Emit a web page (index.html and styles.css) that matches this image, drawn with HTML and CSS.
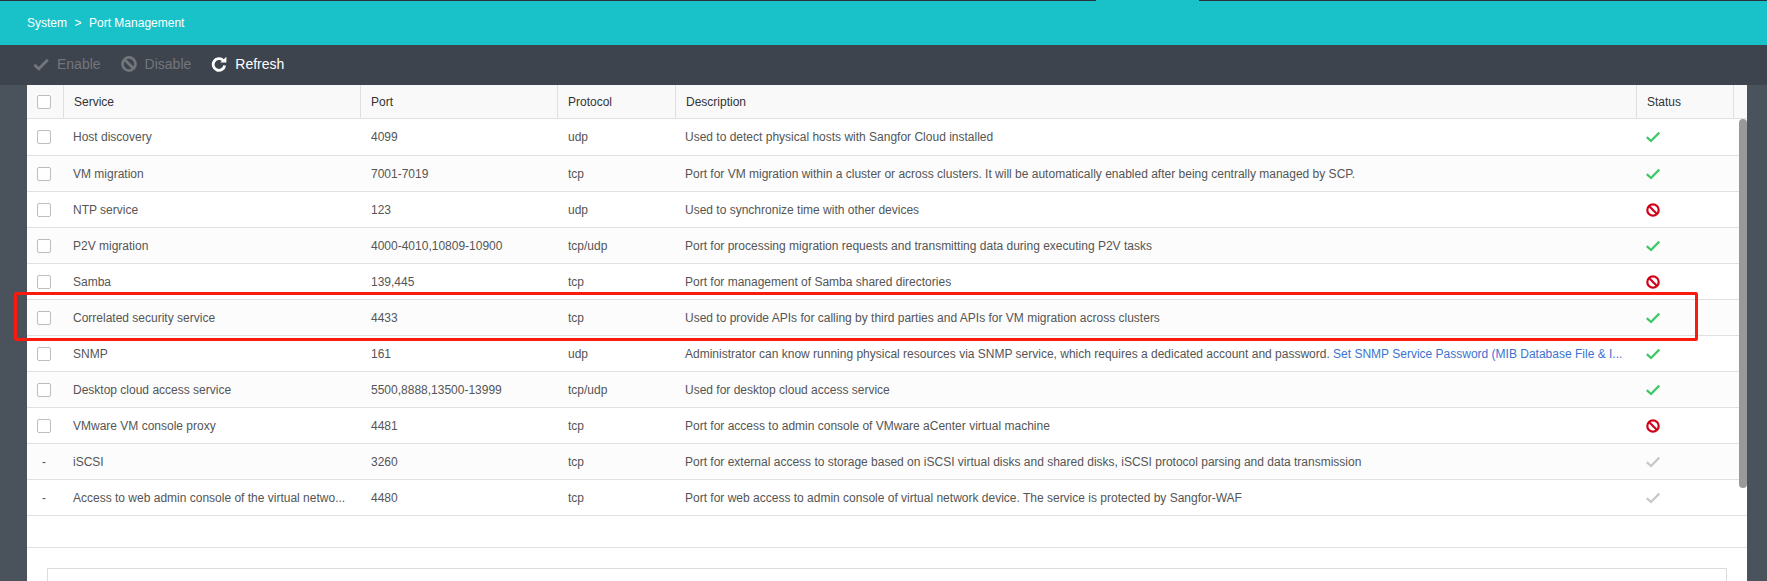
FILE: index.html
```html
<!DOCTYPE html>
<html lang="en">
<head>
<meta charset="utf-8">
<title>Port Management</title>
<link rel="stylesheet" href="styles.css">
</head>
<body>
<svg class="defs" width="0" height="0" aria-hidden="true">
  <symbol id="check" viewBox="0 0 14 12"><path d="M.8 6.2 5 10 13.3 1.6" fill="none" stroke="currentColor"/></symbol>
  <symbol id="ban" viewBox="0 0 14 14"><circle cx="7" cy="7" r="5.7" fill="none" stroke="currentColor"/><path d="M3 3 11 11" fill="none" stroke="currentColor"/></symbol>
</svg>
<header class="topbar">
  <div class="topline"><span class="seg-a"></span><span class="seg-gap"></span><span class="seg-b"></span></div>
  <nav class="crumbs"><span>System</span><span class="sep">&gt;</span><span>Port Management</span></nav>
</header>
<div class="toolbar">
  <button class="tool off"><svg class="ti ti-check"><use href="#check"/></svg>Enable</button>
  <button class="tool off"><svg class="ti ti-ban"><use href="#ban"/></svg>Disable</button>
  <button class="tool on"><svg class="ti ti-ref" viewBox="0 0 16 16"><path d="M12.3 4.6A5.8 5.8 0 1 0 13.7 9.4" fill="none" stroke="currentColor" stroke-width="2.8"/><path d="M9.2 6.6 15.4 .8V6.6Z" fill="currentColor"/></svg>Refresh</button>
</div>
<main class="panel">
  <table class="grid">
    <colgroup><col class="c0"><col class="c1"><col class="c2"><col class="c3"><col class="c4"><col class="c5"><col class="c6"></colgroup>
    <thead>
      <tr><th><i class="box"></i></th><th>Service</th><th>Port</th><th>Protocol</th><th>Description</th><th>Status</th><th></th></tr>
    </thead>
    <tbody>
      <tr><td><i class="box"></i></td><td>Host discovery</td><td>4099</td><td>udp</td><td>Used to detect physical hosts with Sangfor Cloud installed</td><td><svg class="si ok"><use href="#check"/></svg></td><td></td></tr>
      <tr><td><i class="box"></i></td><td>VM migration</td><td>7001-7019</td><td>tcp</td><td>Port for VM migration within a cluster or across clusters. It will be automatically enabled after being centrally managed by SCP.</td><td><svg class="si ok"><use href="#check"/></svg></td><td></td></tr>
      <tr><td><i class="box"></i></td><td>NTP service</td><td>123</td><td>udp</td><td>Used to synchronize time with other devices</td><td><svg class="sb no"><use href="#ban"/></svg></td><td></td></tr>
      <tr><td><i class="box"></i></td><td>P2V migration</td><td>4000-4010,10809-10900</td><td>tcp/udp</td><td>Port for processing migration requests and transmitting data during executing P2V tasks</td><td><svg class="si ok"><use href="#check"/></svg></td><td></td></tr>
      <tr><td><i class="box"></i></td><td>Samba</td><td>139,445</td><td>tcp</td><td>Port for management of Samba shared directories</td><td><svg class="sb no"><use href="#ban"/></svg></td><td></td></tr>
      <tr><td><i class="box"></i></td><td>Correlated security service</td><td>4433</td><td>tcp</td><td>Used to provide APIs for calling by third parties and APIs for VM migration across clusters</td><td><svg class="si ok"><use href="#check"/></svg></td><td></td></tr>
      <tr><td><i class="box"></i></td><td>SNMP</td><td>161</td><td>udp</td><td>Administrator can know running physical resources via SNMP service, which requires a dedicated account and password. <a href="#">Set SNMP Service Password (MIB Database File &amp; I...</a></td><td><svg class="si ok"><use href="#check"/></svg></td><td></td></tr>
      <tr><td><i class="box"></i></td><td>Desktop cloud access service</td><td>5500,8888,13500-13999</td><td>tcp/udp</td><td>Used for desktop cloud access service</td><td><svg class="si ok"><use href="#check"/></svg></td><td></td></tr>
      <tr><td><i class="box"></i></td><td>VMware VM console proxy</td><td>4481</td><td>tcp</td><td>Port for access to admin console of VMware aCenter virtual machine</td><td><svg class="sb no"><use href="#ban"/></svg></td><td></td></tr>
      <tr><td class="dash">-</td><td>iSCSI</td><td>3260</td><td>tcp</td><td>Port for external access to storage based on iSCSI virtual disks and shared disks, iSCSI protocol parsing and data transmission</td><td><svg class="si na"><use href="#check"/></svg></td><td></td></tr>
      <tr><td class="dash">-</td><td>Access to web admin console of the virtual netwo...</td><td>4480</td><td>tcp</td><td>Port for web access to admin console of virtual network device. The service is protected by Sangfor-WAF</td><td><svg class="si na"><use href="#check"/></svg></td><td></td></tr>
    </tbody>
  </table>
  <div class="pager"></div>
  <section class="notes"></section>
  <div class="scroll"></div>
</main>
<div class="highlight"></div>
</body>
</html>
```
FILE: styles.css
```css
* { box-sizing: border-box; }
html, body { margin: 0; height: 581px; overflow: hidden; }
body {
  background: #4a525b;
  font-family: "Liberation Sans", Arial, sans-serif;
  font-size: 12px;
  display: flex;
  flex-direction: column;
  position: relative;
}
.defs { position: absolute; }

.topbar { height: 45px; background: #19c2c9; color: #fff; flex: none; }
.topline { display: flex; height: 1px; }
.seg-a { width: 1096px; background: #2b2f3a; }
.seg-gap { width: 103px; }
.seg-b { flex: 1; background: #2b2f3a; }
.crumbs { display: flex; padding: 15px 0 0 27px; line-height: 14px; }
.sep { margin: 0 7.5px; }

.toolbar {
  height: 40px; flex: none; background: #3e444d;
  display: flex; align-items: center; padding: 0 0 2px 33px; gap: 20px;
}
.tool {
  display: flex; align-items: center; gap: 8px; padding: 0; border: 0; background: none;
  font: 14px "Liberation Sans", Arial, sans-serif;
}
.off { color: #72767c; }
.on { color: #fff; }
.ti { display: block; }
.ti-check { width: 16px; height: 13px; stroke-width: 2.6; }
.ti-ban { width: 16px; height: 16px; stroke-width: 2.4; }
.ti-ref { width: 16px; height: 16px; }

.panel {
  flex: 1; margin: 0 20px 0 27px; background: #fff; position: relative;
  display: flex; flex-direction: column; min-height: 0;
}
.grid { width: 1720px; table-layout: fixed; border-collapse: separate; border-spacing: 0; flex: none; }
.c0 { width: 37px; } .c1 { width: 297px; } .c2 { width: 197px; } .c3 { width: 118px; }
.c4 { width: 961px; } .c5 { width: 97px; } .c6 { width: 13px; }
th {
  height: 34px; padding: 0 0 0 10px; background: #f9f9f9; color: #333; font-weight: 400; text-align: left;
  border-right: 1px solid #e0e0e0; border-bottom: 1px solid #e0e0e0;
}
th:last-child { border-right: 0; }
th:first-child, td:first-child { padding: 0 0 0 10px; }
td {
  height: 36px; padding: 0 0 0 9px; color: #555; background: #fff;
  border-bottom: 1px solid #e0e0e0;
  white-space: nowrap; overflow: hidden;
}
tbody tr:first-child td { height: 37px; }
td:nth-child(3), td:nth-child(4) { padding-left: 10px; }
tbody tr:nth-child(even) td { background: #fcfcfc; }
td a { color: #3b73d0; text-decoration: none; }
.box { display: block; width: 14px; height: 14px; background: #fff; border: 1px solid #bdbdbd; border-radius: 2px; }
td.dash { padding-left: 15px; }
.si { display: block; width: 14px; height: 12px; stroke-width: 2.3; }
.sb { display: block; width: 14px; height: 14px; stroke-width: 2.2; }
.ok { color: #3fc866; }
.no { color: #d0021b; }
.na { color: #c8c8c8; }

.pager { height: 32px; flex: none; border-bottom: 1px solid #e0e0e0; }
.notes { flex: 1; margin: 20px 20px 0; border: 1px solid #dcdcdc; border-bottom: 0; }
.scroll {
  position: absolute; left: 1712px; top: 34px; width: 8px; height: 369px;
  background: #999; border-radius: 4px;
}
.highlight {
  position: absolute; left: 14px; top: 292px; width: 1684px; height: 49px;
  border: 3px solid #fa1a0e; border-radius: 2px;
}
```
